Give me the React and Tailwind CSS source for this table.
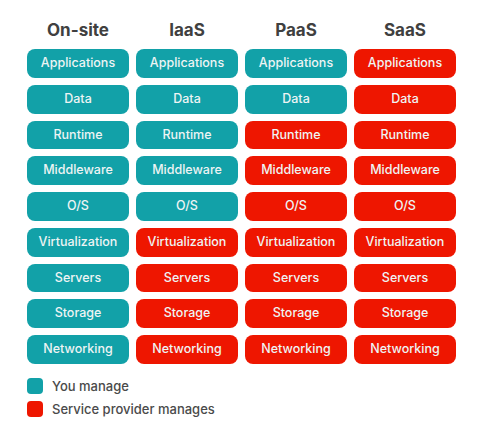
const cols = [
  { name: "On-site", you: 9 },
  { name: "IaaS", you: 5 },
  { name: "PaaS", you: 2 },
  { name: "SaaS", you: 0 },
];
const rows = ["Applications","Data","Runtime","Middleware","O/S","Virtualization","Servers","Storage","Networking"];

export default function App() {
  return (
    <div className="w-[481px] h-[427px] bg-white pl-[27px] pt-[18px]" style={{ fontFamily: "Inter, 'Noto Sans', sans-serif" }}>
      <div className="grid grid-cols-[102px_102px_102px_102px] gap-x-[7px]">
        {cols.map((c) => (
          <div key={c.name} className="h-[26px] flex items-center justify-center text-[17px] font-bold text-[#404040]">
            {c.name}
          </div>
        ))}
      </div>
      <div className="mt-[5px] grid grid-cols-[102px_102px_102px_102px] gap-x-[7px] gap-y-[7px]">
        {rows.map((r, ri) =>
          cols.map((c) => (
            <div
              key={r + c.name}
              className={`h-[28.75px] rounded-[8px] flex items-center justify-center text-[12.5px] font-medium text-[#eef4f4] ${ri < c.you ? "bg-[#12a1a8]" : "bg-[#ee1600]"}`}
            >
              {r}
            </div>
          ))
        )}
      </div>
      <div className="mt-[14px] flex flex-col gap-[7px]">
        <div className="flex items-center gap-[9px] h-[16px]">
          <div className="w-[16px] h-[16px] rounded-[4px] bg-[#12a1a8]" />
          <span className="text-[13px] leading-[16px] font-medium text-[#4a4a4a]">You manage</span>
        </div>
        <div className="flex items-center gap-[9px] h-[16px]">
          <div className="w-[16px] h-[16px] rounded-[4px] bg-[#ee1600]" />
          <span className="text-[13px] leading-[16px] font-medium text-[#4a4a4a]">Service provider manages</span>
        </div>
      </div>
    </div>
  );
}
